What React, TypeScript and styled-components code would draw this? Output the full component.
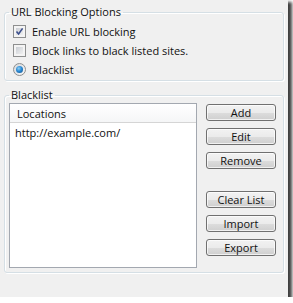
import React, { useState } from "react";
import styled, { createGlobalStyle } from "styled-components";

const GlobalStyle = createGlobalStyle`
  html, body {
    margin: 0;
    padding: 0;
    background: #ffffff;
  }
  body {
    font-family: "Open Sans", "Noto Sans", "Liberation Sans", sans-serif;
    font-size: 11px;
    color: #111111;
  }
`;

// window frame

const Window = styled.div`
  box-sizing: border-box;
  width: 288px;
  height: 297px;
  padding: 4px 4px 0;
  background: #f0f0f0;
  display: flex;
  flex-direction: column;
  gap: 6px;
  box-shadow: 3px 3px 3px 1px rgba(0, 0, 0, 0.75);
`;

const Group = styled.fieldset`
  margin: 0;
  padding: 0;
  min-width: 0;
  border: 1px solid #d5dfe5;
  border-radius: 3px;
  box-shadow: inset 1px 1px 0 #ffffff, 1px 1px 0 #ffffff;
`;

const Legend = styled.legend`
  margin-left: 4px;
  padding: 0 2px;
  line-height: 16px;
`;

const OptionList = styled.div`
  padding: 2px 0 1px 8px;
`;

const ListBody = styled.div`
  padding: 0 6px 4px 4px;
  display: flex;
  gap: 9px;
`;

// options

const OptionRow = styled.label`
  height: 19px;
  display: flex;
  align-items: center;
  gap: 6px;
  cursor: default;
`;

const CheckBox = styled.span<{ $checked: boolean }>`
  position: relative;
  box-sizing: border-box;
  width: 13px;
  height: 13px;
  border: 1px solid #8e8f8f;
  background: #f4f4f4;
  flex-shrink: 0;

  &::before {
    content: "";
    position: absolute;
    inset: 2px;
    background: linear-gradient(135deg, #cbcfd5 0%, #f0f0f0 100%);
  }

  svg {
    position: absolute;
    left: 1px;
    top: 1px;
    display: ${(p) => (p.$checked ? "block" : "none")};
  }
`;

const Radio = styled.span<{ $checked: boolean }>`
  position: relative;
  box-sizing: border-box;
  width: 13px;
  height: 13px;
  border: 1px solid #8e8f8f;
  border-radius: 50%;
  background: linear-gradient(135deg, #d5d8dc 0%, #f7f7f7 100%);
  flex-shrink: 0;

  &::after {
    content: "";
    position: absolute;
    left: 2px;
    top: 2px;
    width: 7px;
    height: 7px;
    border-radius: 50%;
    background: radial-gradient(circle at 40% 35%, #8fd0f4 0%, #2a8ad4 45%, #0f4b87 100%);
    display: ${(p) => (p.$checked ? "block" : "none")};
  }
`;

// list + buttons

const ListBox = styled.div`
  box-sizing: border-box;
  width: 188px;
  height: 165px;
  border: 1px solid #a3a8b0;
  background: #ffffff;
  display: flex;
  flex-direction: column;
`;

const ListHeader = styled.div`
  height: 18px;
  padding-left: 7px;
  display: flex;
  align-items: center;
  background: linear-gradient(#ffffff, #f5f6f7);
  border-bottom: 1px solid #d5d5d5;
`;

const ListItem = styled.div`
  height: 18px;
  padding-left: 5px;
  display: flex;
  align-items: center;
`;

const ButtonColumn = styled.div`
  padding-top: 1px;
  display: flex;
  flex-direction: column;
  gap: 7px;
`;

const Button = styled.button<{ $spaced?: boolean }>`
  box-sizing: border-box;
  width: 70px;
  height: 17px;
  margin-top: ${(p) => (p.$spaced ? "15px" : "0")};
  padding: 0;
  font: inherit;
  line-height: 15px;
  color: #111111;
  border: 1px solid #707070;
  border-radius: 3px;
  background: linear-gradient(#f2f2f2 0%, #ebebeb 50%, #dddddd 51%, #cfcfcf 100%);
  box-shadow: inset 0 0 0 1px rgba(255, 255, 255, 0.7);
`;

const CheckMark = () => (
  <svg width="9" height="9" viewBox="0 0 9 9">
    <path d="M1.5 4.5 L3.6 7 L7.6 1.4" fill="none" stroke="#3c4f8c" strokeWidth="1.6" />
  </svg>
);

export default function App() {
  const [enabled, setEnabled] = useState(true);
  const [blockLinks, setBlockLinks] = useState(false);

  return (
    <>
      <GlobalStyle />
      <Window>
        <Group>
          <Legend>URL Blocking Options</Legend>
          <OptionList>
            <OptionRow onClick={() => setEnabled(!enabled)}>
              <CheckBox $checked={enabled}>
                <CheckMark />
              </CheckBox>
              Enable URL blocking
            </OptionRow>
            <OptionRow onClick={() => setBlockLinks(!blockLinks)}>
              <CheckBox $checked={blockLinks}>
                <CheckMark />
              </CheckBox>
              Block links to black listed sites.
            </OptionRow>
            <OptionRow>
              <Radio $checked />
              Blacklist
            </OptionRow>
          </OptionList>
        </Group>

        <Group>
          <Legend>Blacklist</Legend>
          <ListBody>
            <ListBox>
              <ListHeader>Locations</ListHeader>
              <ListItem>http://example.com/</ListItem>
            </ListBox>
            <ButtonColumn>
              <Button>Add</Button>
              <Button>Edit</Button>
              <Button>Remove</Button>
              <Button $spaced>Clear List</Button>
              <Button>Import</Button>
              <Button>Export</Button>
            </ButtonColumn>
          </ListBody>
        </Group>
      </Window>
    </>
  );
}
